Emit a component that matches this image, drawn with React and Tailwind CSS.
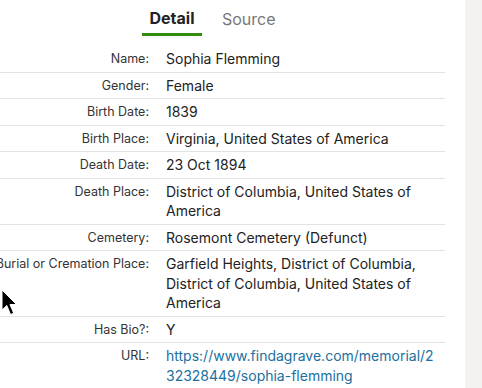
import React from "react";

const rows = [
  ["Name:", "Sophia Flemming"],
  ["Gender:", "Female"],
  ["Birth Date:", "1839"],
  ["Birth Place:", "Virginia, United States of America"],
  ["Death Date:", "23 Oct 1894"],
  ["Death Place:", "District of Columbia, United States of America"],
  ["Cemetery:", "Rosemont Cemetery (Defunct)"],
  ["Burial or Cremation Place:", "Garfield Heights, District of Columbia, District of Columbia, United States of America"],
  ["Has Bio?:", "Y"],
];

export default function App() {
  return (
    <div
      className="relative flex w-[482px] h-[388px] bg-white overflow-hidden"
      style={{ fontFamily: "Inter, 'Noto Sans', sans-serif" }}
    >
      <div className="w-[445px] shrink-0 flex flex-col">
        <div className="h-[46px] flex items-start pl-[142px]">
          <div className="h-[36px] w-[60px] pt-[2px] flex items-center justify-center border-b-[3px] border-[#338a0b] text-[16px] font-bold text-[#222]">
            Detail
          </div>
          <div className="h-[36px] pt-[2px] pl-[20px] flex items-center text-[16px] text-[#777]">
            Source
          </div>
        </div>
        {rows.map(([l, v]) => (
          <div key={l} className="flex items-start py-[3px] border-b border-[#e2e2e2]">
            <div className="w-[149px] shrink-0 flex justify-end text-[12.5px] leading-[19.5px] text-[#333] whitespace-nowrap">
              <span>{l}</span>
            </div>
            <div className="ml-[17px] w-[268px] text-[14px] leading-[19.5px] text-[#222]">{v}</div>
          </div>
        ))}
        <div className="flex items-start py-[3px]">
          <div className="w-[149px] shrink-0 flex justify-end text-[12.5px] leading-[19.5px] text-[#333]">
            <span>URL:</span>
          </div>
          <div className="ml-[17px] w-[268px] text-[14px] leading-[19.5px] text-[#20709f] break-all">
            https://www.findagrave.com/memorial/232328449/sophia-flemming
          </div>
        </div>
      </div>
      <div className="w-[20px] shrink-0" />
      <div className="flex-1 bg-[#f4f1ee]" />
      <svg className="absolute left-[1px] top-[289px]" width="17" height="28" viewBox="0 0 17 28">
        <path d="M1 1 L1 21 L5.8 16.5 L9.5 25.5 L12.7 24.2 L9 15.5 L15.5 15.5 Z" fill="#000" stroke="#fff" strokeWidth="1" />
      </svg>
    </div>
  );
}
